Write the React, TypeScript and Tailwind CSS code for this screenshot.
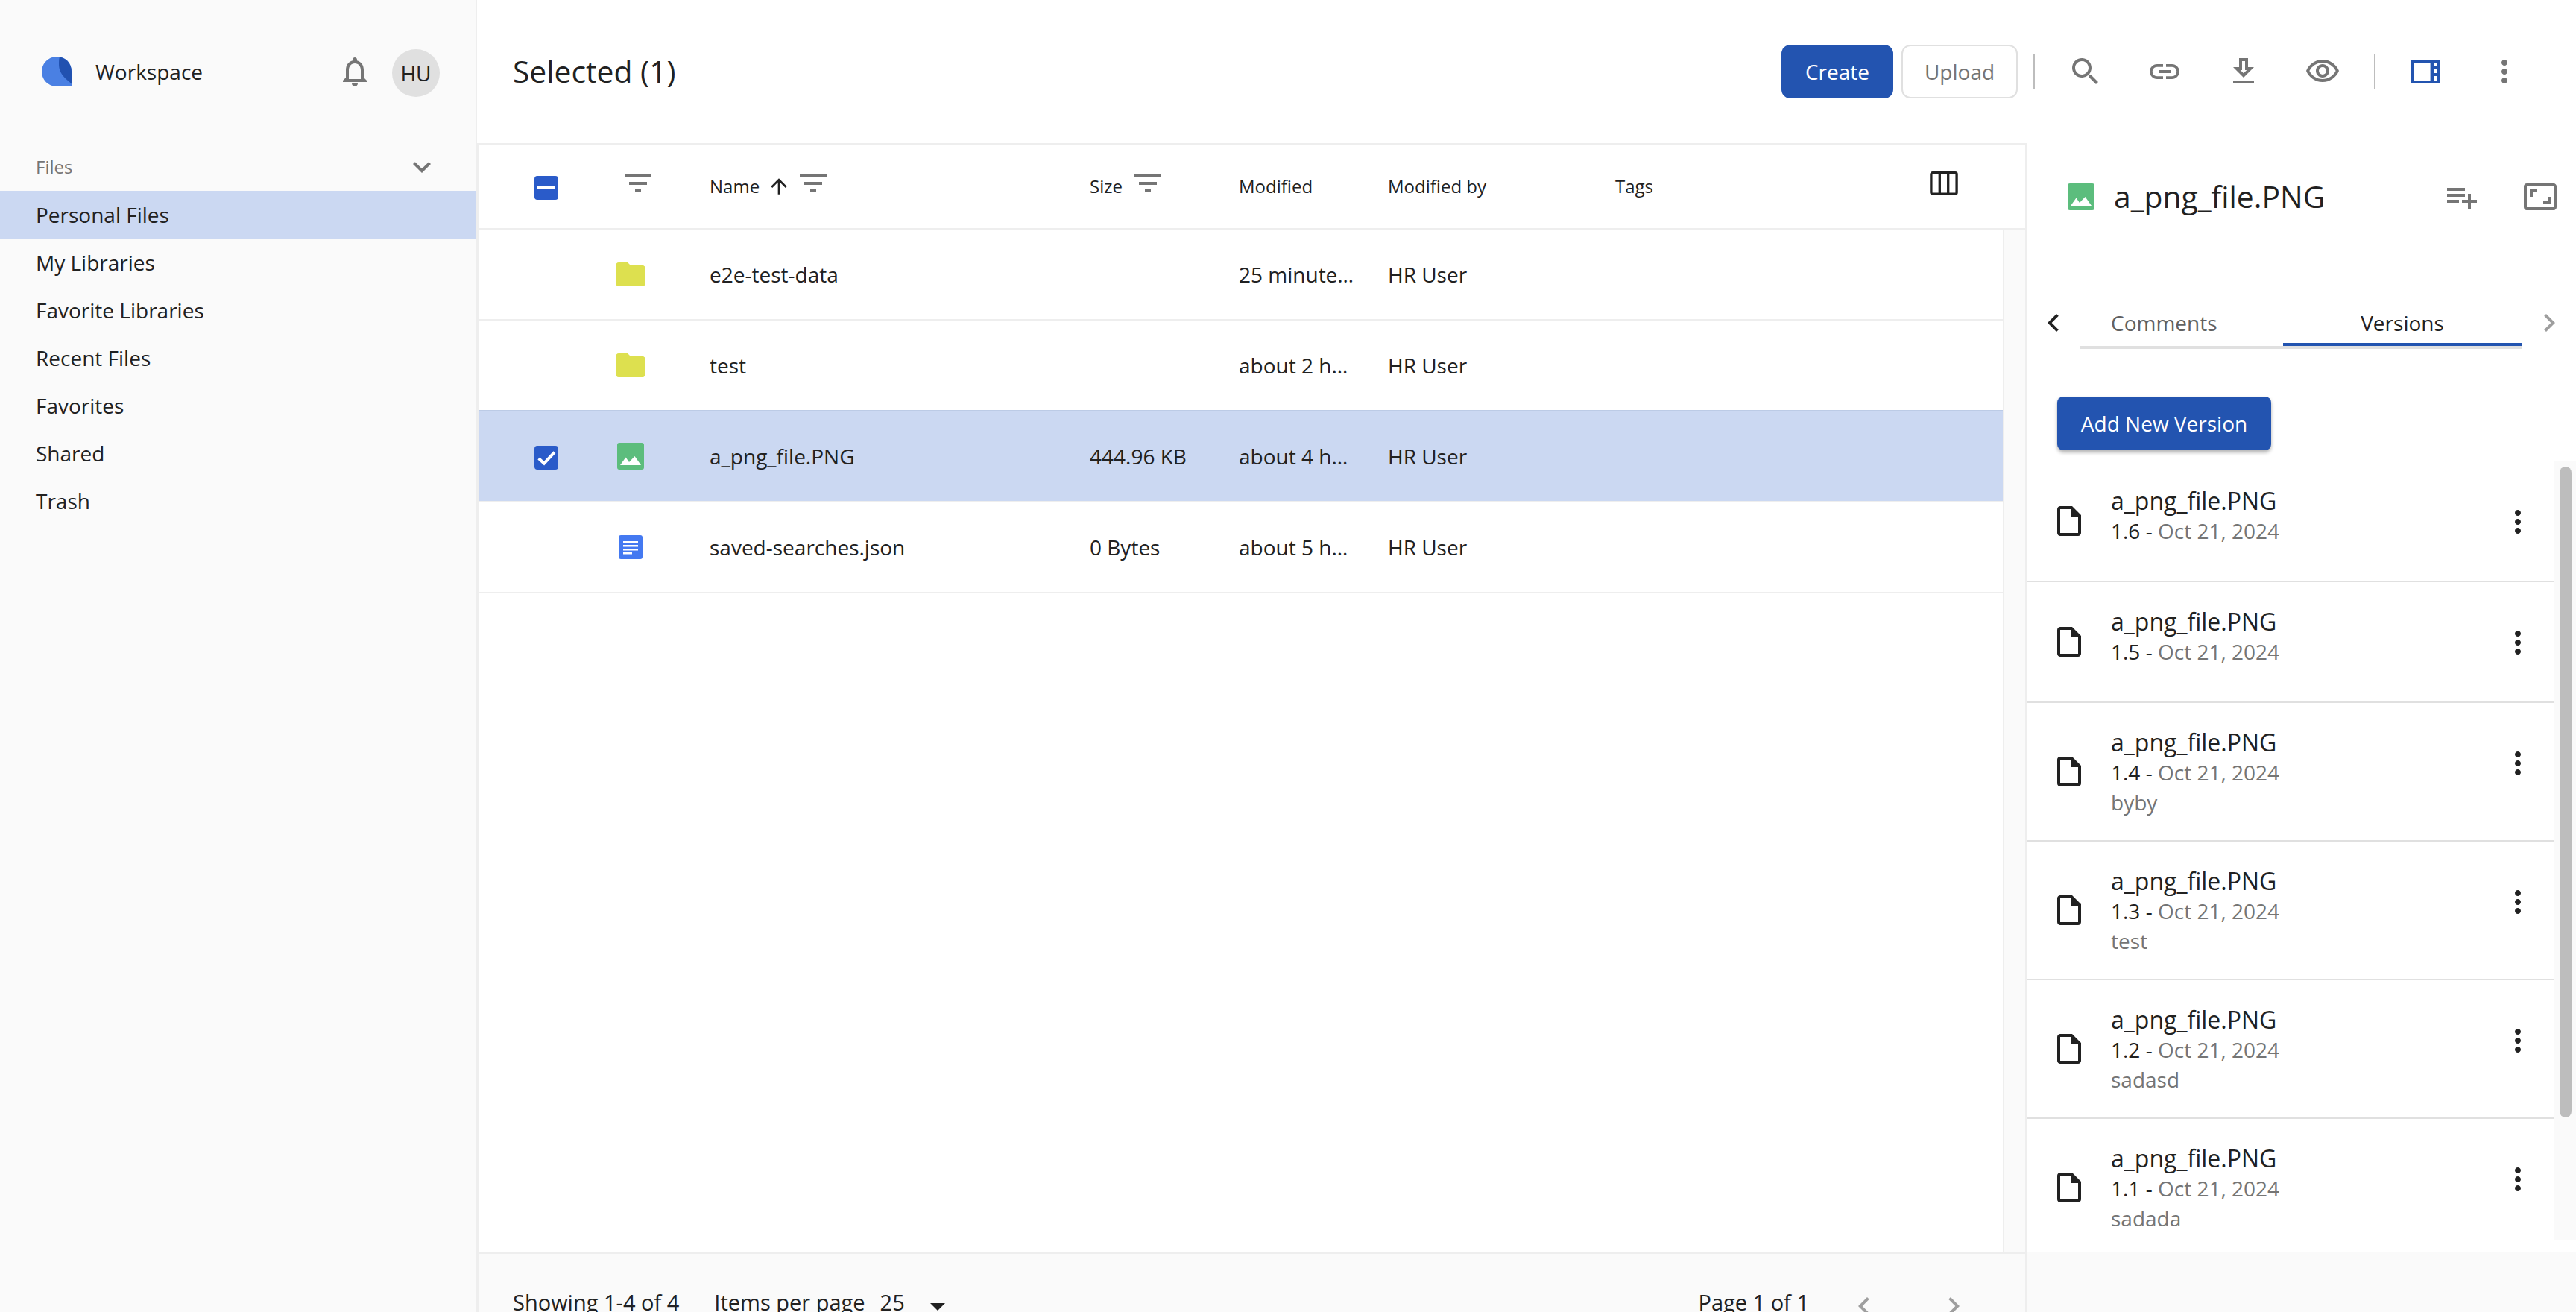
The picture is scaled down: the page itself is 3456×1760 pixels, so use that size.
const doc = "M14 2H6c-1.1 0-2 .9-2 2v16c0 1.1.9 2 2 2h12c1.1 0 2-.9 2-2V8l-6-6zm4 18H6V4h7v5h5v11z"
const more = "M12 8c1.1 0 2-.9 2-2s-.9-2-2-2-2 .9-2 2 .9 2 2 2zm0 2c-1.1 0-2 .9-2 2s.9 2 2 2 2-.9 2-2-.9-2-2-2zm0 6c-1.1 0-2 .9-2 2s.9 2 2 2 2-.9 2-2-.9-2-2-2z"
const filter = "M10 18h4v-2h-4v2zM3 6v2h18V6H3zm3 7h12v-2H6v2z"
const chevronLeft = "M15.41 7.41L14 6l-6 6 6 6 1.41-1.41L10.83 12z"
const chevronRight = "M10 6L8.59 7.41 13.17 12l-4.58 4.59L10 18l6-6z"

function Icon({ d, className = "w-12 h-12 fill-[#757575]" }: { d: string; className?: string }) {
  return (
    <svg viewBox="0 0 24 24" className={className}>
      <path d={d} />
    </svg>
  )
}

function Folder() {
  return (
    <svg viewBox="0 0 24 24" className="h-12 w-12 fill-[#dde04f]">
      <path d="M10 4H4c-1.1 0-1.99.9-1.99 2L2 18c0 1.1.9 2 2 2h16c1.1 0 2-.9 2-2V8c0-1.1-.9-2-2-2h-8l-2-2z" />
    </svg>
  )
}

function ImageFile() {
  return (
    <svg viewBox="0 0 36 36" className="h-9 w-9">
      <rect width="36" height="36" rx="3" fill="#5cbd7d" />
      <path d="M4 30L11.500 19.500L16 26L23.500 18L32 30z" fill="#fff" />
    </svg>
  )
}

function DocFile() {
  return (
    <svg viewBox="0 0 32 32" className="h-8 w-8">
      <rect width="32" height="32" rx="3" fill="#4479f1" />
      <path d="M6 8h20v2.500H6zM6 13h20v2.500H6zM6 18h20v2.500H6zM6 23h12v2.500H6z" fill="#fff" />
    </svg>
  )
}

function Checkbox({ mark }: { mark: "check" | "dash" }) {
  return (
    <span className="flex h-8 w-8 items-center justify-center rounded-[4px] bg-[#2a5bc9]">
      {mark === "check" ? (
        <svg viewBox="0 0 24 24" className="h-8 w-8 fill-none stroke-white stroke-[3]">
          <path d="M4.300 12.750l5.450 5 10.450-11.250" />
        </svg>
      ) : (
        <span className="h-1 w-6 bg-white" />
      )}
    </span>
  )
}

const navItems = ["My Libraries", "Favorite Libraries", "Recent Files", "Favorites", "Shared", "Trash"]

const rows = [
  { name: "e2e-test-data", size: "", modified: "25 minute…", icon: <Folder />, selected: false },
  { name: "test", size: "", modified: "about 2 h…", icon: <Folder />, selected: false },
  { name: "a_png_file.PNG", size: "444.96 KB", modified: "about 4 h…", icon: <ImageFile />, selected: true },
  { name: "saved-searches.json", size: "0 Bytes", modified: "about 5 h…", icon: <DocFile />, selected: false },
]

const versions = [
  { id: "1.6", note: "" },
  { id: "1.5", note: "" },
  { id: "1.4", note: "byby" },
  { id: "1.3", note: "test" },
  { id: "1.2", note: "sadasd" },
  { id: "1.1", note: "sadada" },
]

const tableCols = "grid grid-cols-[182px_128px_510px_200px_200px_305px_1fr] items-center"

function Sidebar() {
  return (
    <aside className="w-[640px] shrink-0 border-r-2 border-[#eeeeee] bg-[#fafafa] text-[28px] text-[#212121]">
      <div className="flex h-[192px] items-center pl-[56px] pr-[48px]">
        <svg viewBox="0 0 40 40" className="h-10 w-10">
          <path d="M20 0C32 0 40 8 40 20V40H20C9 40 0 31 0 20S9 0 20 0z" fill="#4a80e3" />
          <path d="M24 0.500C32 1.500 40 9 40 20V36.500C33 30 23 24 23 10C23 6 23 3 24 0.500z" fill="#2151b0" />
        </svg>
        <span className="ml-[32px]">Workspace</span>
        <div className="ml-auto flex items-center gap-[26px]">
          <Icon d="M12 22c1.100 0 2-.9 2-2h-4c0 1.100.9 2 2 2zm6-6v-5c0-3.070-1.630-5.640-4.500-6.320V4c0-.83-.67-1.500-1.500-1.500s-1.500.67-1.500 1.500v.68C7.640 5.360 6 7.920 6 11v5l-2 2v1h16v-1l-2-2zm-2 1H8v-6c0-2.480 1.510-4.500 4-4.500s4 2.020 4 4.500v6z" />
          <span className="mt-[4px] flex h-16 w-16 items-center justify-center rounded-full bg-[#e0e0e0] font-medium">HU</span>
        </div>
      </div>
      <div className="flex h-[64px] items-center justify-between pl-[48px] pr-[48px] text-[24px] text-[#757575]">
        Files
        <Icon d="M7.410 8.590L12 13.170l4.590-4.580L18 10l-6 6-6-6 1.410-1.410z" />
      </div>
      <div className="flex h-[64px] items-center bg-[#cbd8f2] pl-[48px]">Personal Files</div>
      {navItems.map((item) => (
        <div key={item} className="flex h-[64px] items-center pl-[48px]">{item}</div>
      ))}
    </aside>
  )
}

function Toolbar() {
  return (
    <header className="flex h-[192px] shrink-0 items-center pl-[48px] pr-[43px]">
      <h1 className="text-[40.800px] text-[#212121]">Selected (1)</h1>
      <div className="ml-auto flex items-center">
        <button className="h-[72px] w-[150px] rounded-[12px] bg-[#2354b0] text-[28px] text-white">Create</button>
        <button className="ml-[11px] h-[72px] w-[156px] rounded-[12px] border-2 border-[#e0e0e0] text-[28px] text-[#757575]">Upload</button>
        <span className="ml-[21px] h-12 w-0.5 bg-[#bdbdbd]" />
        <div className="ml-[15px] flex">
          <ToolButton d="M15.500 14h-.79l-.28-.27C15.410 12.590 16 11.110 16 9.500 16 5.910 13.090 3 9.500 3S3 5.910 3 9.500 5.910 16 9.500 16c1.610 0 3.090-.59 4.230-1.570l.27.28v.79l5 4.990L20.490 19l-4.990-5zm-6 0C7.010 14 5 11.990 5 9.500S7.010 5 9.500 5 14 7.010 14 9.500 11.990 14 9.500 14z" />
          <ToolButton d="M3.900 12c0-1.710 1.390-3.100 3.100-3.100h4V7H7c-2.760 0-5 2.240-5 5s2.240 5 5 5h4v-1.900H7c-1.710 0-3.100-1.390-3.100-3.100zM8 13h8v-2H8v2zm9-6h-4v1.900h4c1.710 0 3.100 1.390 3.100 3.100s-1.390 3.100-3.100 3.100h-4V17h4c2.760 0 5-2.240 5-5s-2.240-5-5-5z" />
          <ToolButton d="M15 9V3H9v6H5l7 7 7-7h-4zm-4 2V5h2v6h1.170L12 13.170 9.830 11H11zM5 18h14v2H5z" />
          <ToolButton d="M12 6a9.770 9.770 0 0 1 8.820 5.500C19.170 14.870 15.790 17 12 17s-7.170-2.130-8.820-5.500A9.770 9.770 0 0 1 12 6m0-2C7 4 2.730 7.110 1 11.500 2.730 15.890 7 19 12 19s9.270-3.110 11-7.500C21.270 7.110 17 4 12 4zm0 5a2.500 2.500 0 0 1 0 5 2.500 2.500 0 0 1 0-5m0-2c-2.480 0-4.500 2.020-4.500 4.500S9.520 16 12 16s4.500-2.020 4.500-4.500S14.480 7 12 7z" />
        </div>
        <span className="ml-[16px] h-12 w-0.5 bg-[#bdbdbd]" />
        <div className="ml-[14px] flex">
          <div className="flex w-[106px] justify-center">
            <svg viewBox="0 0 24 24" className="h-12 w-12 fill-[#2354b0]">
              <path d="M2 4h20v16H2V4zm2 2v12h11.300V6H4zm13.500 0v2.500H20V6h-2.500zm0 4.500V13H20v-2.500h-2.500zm0 4.500v3H20v-3h-2.500z" />
            </svg>
          </div>
          <ToolButton d={more} />
        </div>
      </div>
    </header>
  )
}

function ToolButton({ d }: { d: string }) {
  return (
    <div className="flex w-[106px] justify-center">
      <Icon d={d} />
    </div>
  )
}

function FileTable() {
  return (
    <div className="flex min-h-0 flex-1 flex-col border-l-2 border-t-2 border-[#eeeeee]">
      <div className={`${tableCols} h-[114px] shrink-0 border-b-2 border-[#eeeeee] text-[24px] text-[#212121]`}>
        <div className="mt-[4px] flex justify-center"><Checkbox mark="dash" /></div>
        <div className="-mt-2 pl-[8px]"><Icon d={filter} /></div>
        <div className="flex items-center">
          Name
          <Icon d="M4 12l1.410 1.410L11 7.830V20h2V7.830l5.580 5.590L20 12l-8-8-8 8z" className="ml-[10px] h-8 w-8 fill-[#212121]" />
          <Icon d={filter} className="-mt-2 ml-[6px] h-12 w-12 fill-[#757575]" />
        </div>
        <div className="flex items-center">
          Size
          <Icon d={filter} className="-mt-2 ml-[10px] h-12 w-12 fill-[#757575]" />
        </div>
        <div>Modified</div>
        <div>Modified by</div>
        <div className="flex items-center justify-between pr-[90px]">
          Tags
          <svg viewBox="0 0 40 34" className="-mt-2 h-[34px] w-[38px] fill-none stroke-[#212121] stroke-[3.500]">
            <rect x="2" y="2" width="36" height="30" rx="2" />
            <path d="M14 2v30M26 2v30" />
          </svg>
        </div>
      </div>
      <div className="flex min-h-0 flex-1">
        <div className="flex-1 border-r-2 border-[#eeeeee]">
          {rows.map((row) => (
            <div
              key={row.name}
              className={`${tableCols} border-b-2 border-[#eeeeee] text-[28px] text-[#212121] ${row.selected ? "-mt-0.5 h-[124px] border-t-2 border-t-[#bccbe6] bg-[#cbd8f2]" : "h-[122px]"}`}
            >
              <div className="mt-[4px] flex justify-center">{row.selected && <Checkbox mark="check" />}</div>
              <div className="-ml-[2px] flex w-[48px] justify-center">{row.icon}</div>
              <div>{row.name}</div>
              <div>{row.size}</div>
              <div>{row.modified}</div>
              <div>HR User</div>
              <div />
            </div>
          ))}
        </div>
        <div className="w-[28px] shrink-0 bg-[#fafafa]" />
      </div>
    </div>
  )
}

function TableFooter() {
  return (
    <footer className="flex h-[80px] shrink-0 items-start border-l-2 border-t-2 border-[#eeeeee] bg-[#fafafa] pl-[46px] pr-[72px] pt-[46px] text-[29px] leading-[38px] text-[#212121]">
      <span>Showing 1-4 of 4</span>
      <span className="ml-[47px]">Items per page</span>
      <span className="ml-[20px]">25</span>
      <Icon d="M7 10l5 5 5-5z" className="ml-[20px] h-12 w-12 fill-[#212121]" />
      <span className="ml-auto">Page 1 of 1</span>
      <Icon d={chevronLeft} className="ml-[50px] h-12 w-12 fill-[#9e9e9e]" />
      <Icon d={chevronRight} className="ml-[72px] h-12 w-12 fill-[#9e9e9e]" />
    </footer>
  )
}

function VersionsPanel() {
  return (
    <section className="flex w-[739px] shrink-0 flex-col border-l-[3px] border-[#eeeeee]">
      <div className="flex min-h-0 flex-1 flex-col">
        <div className="flex h-[144px] shrink-0 items-center pl-[54px] pr-[24px]">
          <ImageFile />
          <span className="ml-[26px] text-[40.800px] text-[#212121]">a_png_file.PNG</span>
          <Icon d="M14 10H2v2h12v-2zm0-4H2v2h12V6zm4 8v-4h-2v4h-4v2h4v4h2v-4h4v-2h-4zM2 16h8v-2H2v2z" className="ml-auto h-12 w-12 fill-[#757575]" />
          <Icon d="M19 12h-2v3h-3v2h5v-5zM7 9h3V7H5v5h2V9zm14-6H3c-1.100 0-2 .9-2 2v14c0 1.100.9 2 2 2h18c1.100 0 2-.9 2-2V5c0-1.100-.9-2-2-2zm0 16.010H3V4.990h18v14.020z" className="ml-[57px] h-12 w-12 fill-[#757575]" />
        </div>
        <div className="flex h-[132px] shrink-0 items-end pl-[11px]">
          <Icon d={chevronLeft} className="mb-[11px] h-12 w-12 fill-[#212121]" />
          <div className="ml-[12px] flex h-[66px] w-[592px] border-b-4 border-[#e0e0e0] text-[28px]">
            <div className="w-[272px] pl-[41px] leading-[62px] text-[#616161]">Comments</div>
            <div className="-mb-1 h-[62px] w-[320px] border-b-4 border-[#2354b0] text-center leading-[62px] text-[#212121]">Versions</div>
          </div>
          <Icon d={chevronRight} className="mb-[11px] ml-[13px] h-12 w-12 fill-[#9e9e9e]" />
        </div>
        <div className="shrink-0 pl-[40px] pt-[64px]">
          <button className="h-[72px] w-[287px] rounded-[8px] bg-[#2354b0] text-[28px] text-white shadow-[0_3px_5px_rgba(0,0,0,0.3)]">Add New Version</button>
        </div>
        <div className="mb-[17px] mt-[15px] flex min-h-0 flex-1 overflow-hidden">
          <div className="flex-1">
            {versions.map((v) => (
              <div key={v.id} className="flex min-h-[162px] items-center border-b-2 border-[#e0e0e0] pl-[32px] pr-[24px]">
                <Icon d={doc} className="h-12 w-12 fill-[#212121]" />
                <div className="ml-[32px] flex-1 self-start pb-[31px] pt-[33px] text-[28px] leading-[40px]">
                  <div className="text-[32px] text-[#212121]">a_png_file.PNG</div>
                  <div className="text-[#212121]">{v.id} - <span className="text-[#757575]">Oct 21, 2024</span></div>
                  {v.note && <div className="text-[#757575]">{v.note}</div>}
                </div>
                <Icon d={more} className="mt-[57px] h-12 w-12 self-start fill-[#212121]" />
              </div>
            ))}
          </div>
          <div className="w-[30px] shrink-0 bg-[#fafafa]">
            <div className="ml-[8px] mt-[7px] h-[873px] w-4 rounded-full bg-[#bdbdbd]" />
          </div>
        </div>
      </div>
      <div className="h-[80px] shrink-0 bg-[#fafafa]" />
    </section>
  )
}

export default function App() {
  return (
    <div className="flex h-[1760px] w-[3456px] overflow-hidden bg-white font-['Open_Sans',sans-serif]">
      <Sidebar />
      <main className="flex min-w-0 flex-1 flex-col">
        <Toolbar />
        <div className="flex min-h-0 flex-1">
          <div className="flex min-w-0 flex-1 flex-col">
            <FileTable />
            <TableFooter />
          </div>
          <VersionsPanel />
        </div>
      </main>
    </div>
  )
}
